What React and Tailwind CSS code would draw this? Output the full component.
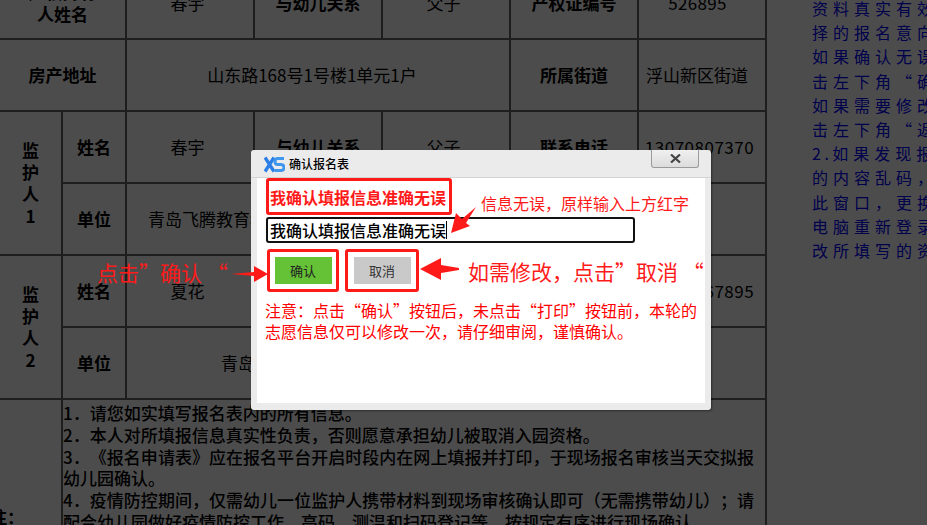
const noteLines = [
  "1．请您如实填写报名表内的所有信息。",
  "2．本人对所填报信息真实性负责，否则愿意承担幼儿被取消入园资格。",
  "3．《报名申请表》应在报名平台开启时段内在网上填报并打印，于现场报名审核当天交拟报幼儿园确认。",
  "4．疫情防控期间，仅需幼儿一位监护人携带材料到现场审核确认即可（无需携带幼儿）；请配合幼儿园做好疫情防控工作，高码、测温和扫码登记等，按规定有序进行现场确认。",
];

const helpLines = [
  "资料真实有效",
  "择的报名意向",
  "如果确认无误",
  "击左下角“确",
  "如果需要修改",
  "击左下角“返",
  "如果发现报",
  "的内容乱码，",
  "此窗口，更换",
  "电脑重新登录",
  "改所填写的资",
];

const Label = ({ children, ...rest }) => (
  <td {...rest} className="border-2 border-[#666] text-center font-bold">
    {children}
  </td>
);

const Value = ({ children, ...rest }) => (
  <td {...rest} className="border-2 border-[#666] pr-[5px] text-center">
    {children}
  </td>
);

const EnrollTable = () => (
  <table className="-mt-[34px] -ml-[2px] h-fit w-[767px] shrink-0 table-fixed border-collapse text-[17px] leading-[22px] text-black [text-spacing-trim:space-all]">
    <colgroup>
      <col className="w-[63px]" />
      <col className="w-[64px]" />
      <col className="w-[128px]" />
      <col className="w-[128px]" />
      <col className="w-[128px]" />
      <col className="w-[128px]" />
      <col className="w-[128px]" />
    </colgroup>
    <tbody>
      <tr className="h-[72px]">
        <Label colSpan={2}>
          产权持有
          <br />
          人姓名
        </Label>
        <Value>春宇</Value>
        <Label>与幼儿关系</Label>
        <Value>父子</Value>
        <Label>产权证编号</Label>
        <td className="border-2 border-[#666] pr-[9px] text-center tracking-[0.3px]">526895</td>
      </tr>
      <tr className="h-[72px]">
        <Label colSpan={2}>房产地址</Label>
        <td colSpan={3} className="border-2 border-[#666] pr-[12px] text-center">
          山东路168号1号楼1单元1户
        </td>
        <Label>所属街道</Label>
        <td className="border-2 border-[#666] pr-[10px] text-center">浮山新区街道</td>
      </tr>
      <tr className="h-[72px]">
        <Label rowSpan={2}>
          监<br />护<br />人<br />1
        </Label>
        <Label>姓名</Label>
        <Value>春宇</Value>
        <Label>与幼儿关系</Label>
        <Value>父子</Value>
        <Label>联系电话</Label>
        <Value>
          <span className="tracking-[0.5px]">13070807370</span>
        </Value>
      </tr>
      <tr className="h-[72px]">
        <Label>单位</Label>
        <td colSpan={3} className="border-2 border-[#666] pl-[21px]">
          青岛飞腾教育科技有限公司
        </td>
        <Value />
        <Value />
      </tr>
      <tr className="h-[72px]">
        <Label rowSpan={2}>
          监<br />护<br />人<br />2
        </Label>
        <Label>姓名</Label>
        <Value>夏花</Value>
        <Label>与幼儿关系</Label>
        <Value>母女</Value>
        <Label>联系电话</Label>
        <Value>
          <span className="tracking-[0.5px]">13012367895</span>
        </Value>
      </tr>
      <tr className="h-[72px]">
        <Label>单位</Label>
        <td colSpan={3} className="border-2 border-[#666] pl-[10px] text-center">
          青岛飞腾教育科技有限公司
        </td>
        <Value />
        <Value />
      </tr>
      <tr className="h-[234px]">
        <td className="overflow-visible border-2 border-[#666] font-bold">
          <span className="-ml-[27px] block whitespace-nowrap pt-[2px]">备注：</span>
        </td>
        <td colSpan={6} className="border-2 border-[#666] pr-[11px] pt-[2px] align-top font-medium leading-[21.8px] text-justify">
          {noteLines.map((line) => (
            <p key={line}>{line}</p>
          ))}
        </td>
      </tr>
    </tbody>
  </table>
);

const HelpPanel = () => (
  <div className="-mt-[4px] min-w-0 flex-1 pl-[45px] text-[16px] leading-[24.2px] tracking-[5px] text-[#0000ff]">
    {helpLines.map((line, i) => (
      <p key={line} className="whitespace-nowrap">
        {i === 6 && <span className="tracking-[3.5px]">2.</span>}
        {line}
      </p>
    ))}
  </div>
);

const Logo = () => (
  <svg width="21" height="17" viewBox="0 0 21 17" className="shrink-0">
    <path d="M1 1.5 L10 15.5 M10 1.5 L1 15.5" stroke="#2b7fe6" strokeWidth="3.4" fill="none" />
    <path d="M20 2.5 H13.5 Q11 2.5 11 5.5 Q11 8.5 13.5 8.5 H17 Q20 8.5 20 11.5 Q20 14.5 17 14.5 H10.5" stroke="#3f97ee" strokeWidth="3" fill="none" />
  </svg>
);

const ConfirmDialog = () => (
  <div className="absolute left-[251px] top-[150px] flex h-[260px] w-[460px] flex-col rounded-[3px] bg-[#ebebeb] shadow-[1px_1px_2px_rgba(0,0,0,0.4)]">
    <div className="relative flex h-[28px] shrink-0 items-center gap-[4px] border-b border-[#d4d4d4] pl-[13px] pt-[1px]">
      <Logo />
      <span className="text-[12px] font-medium text-black">确认报名表</span>
      <button className="absolute right-[12px] top-0 flex h-[18px] w-[48px] items-center justify-center rounded-b-[3px] border border-t-0 border-[#9a9a9a] bg-gradient-to-b from-[#f0f0f0] to-[#dcdcdc]">
        <svg width="11" height="9" viewBox="0 0 11 9">
          <path d="M1 0.5 L10 8.5 M10 0.5 L1 8.5" stroke="#444" strokeWidth="2.2" />
        </svg>
      </button>
    </div>
    <div className="mb-[7px] ml-[6px] mr-[6px] flex-1 bg-white pl-[9px]">
      <div className="flex h-[37px] w-[186px] items-center justify-center rounded-[3px] border-[3px] border-[#ff1a1a] pr-[2px] text-[16px] font-bold text-[#ff1a1a]">
        我确认填报信息准确无误
      </div>
      <div className="mt-[2px] flex h-[26px] w-[369px] items-center rounded-[3px] border-2 border-[#111] pl-[2px] text-[16px] font-medium text-black">
        我确认填报信息准确无误
        <span className="h-[18px] w-px bg-black" />
      </div>
      <div className="mt-[6px] flex gap-[6px] pl-[1px]">
        <div className="flex h-[43px] w-[72px] items-center justify-center rounded-[3px] border-[3px] border-[#ff1a1a]">
          <button className="h-[27px] w-[57px] bg-[#65c135] text-[13px] text-[#222]">确认</button>
        </div>
        <div className="flex h-[43px] w-[74px] items-center justify-center rounded-[3px] border-[3px] border-[#ff1a1a]">
          <button className="h-[27px] w-[57px] bg-[#c9c9c9] text-[13px] text-[#333]">取消</button>
        </div>
      </div>
      <p className="-ml-px mt-[8px] w-[434px] text-[16px] leading-[21px] text-[#ff0000]">
        注意：点击“确认”按钮后，未点击“打印”按钮前，本轮的志愿信息仅可以修改一次，请仔细审阅，谨慎确认。
      </p>
    </div>
  </div>
);

// red annotations drawn on top of the screenshot
const Annotations = () => (
  <>
    <svg width="927" height="525" className="pointer-events-none absolute left-0 top-0">
      <polygon points="451,233 456,213 462,219 476,207 466,223 470,226" fill="#ff1a1a" />
      <polygon points="231,274 254,272 254,266 268,274 254,282 254,276" fill="#ff1a1a" />
      <polygon points="420,269 441,258 441,265 459,268 459,270 441,273 441,280" fill="#ff1a1a" />
    </svg>
    <span className="absolute left-[481px] top-[192px] text-[16px] leading-[22px] text-[#ff1a1a]">信息无误，原样输入上方红字</span>
    <span className="absolute left-[97px] top-[259px] whitespace-nowrap text-[21px] leading-[26px] text-[#ff1a1a]">点击”确认 “</span>
    <span className="absolute left-[468px] top-[258px] whitespace-nowrap text-[21px] leading-[26px] text-[#ff1a1a]">如需修改，点击”取消 “</span>
  </>
);

export default function App() {
  return (
    <div className="relative h-[525px] w-[927px] overflow-hidden bg-white font-['Noto_Sans_CJK_SC',sans-serif]">
      <div className="flex">
        <EnrollTable />
        <HelpPanel />
      </div>
      <div className="absolute inset-0 bg-black/70" />
      <ConfirmDialog />
      <Annotations />
    </div>
  );
}
